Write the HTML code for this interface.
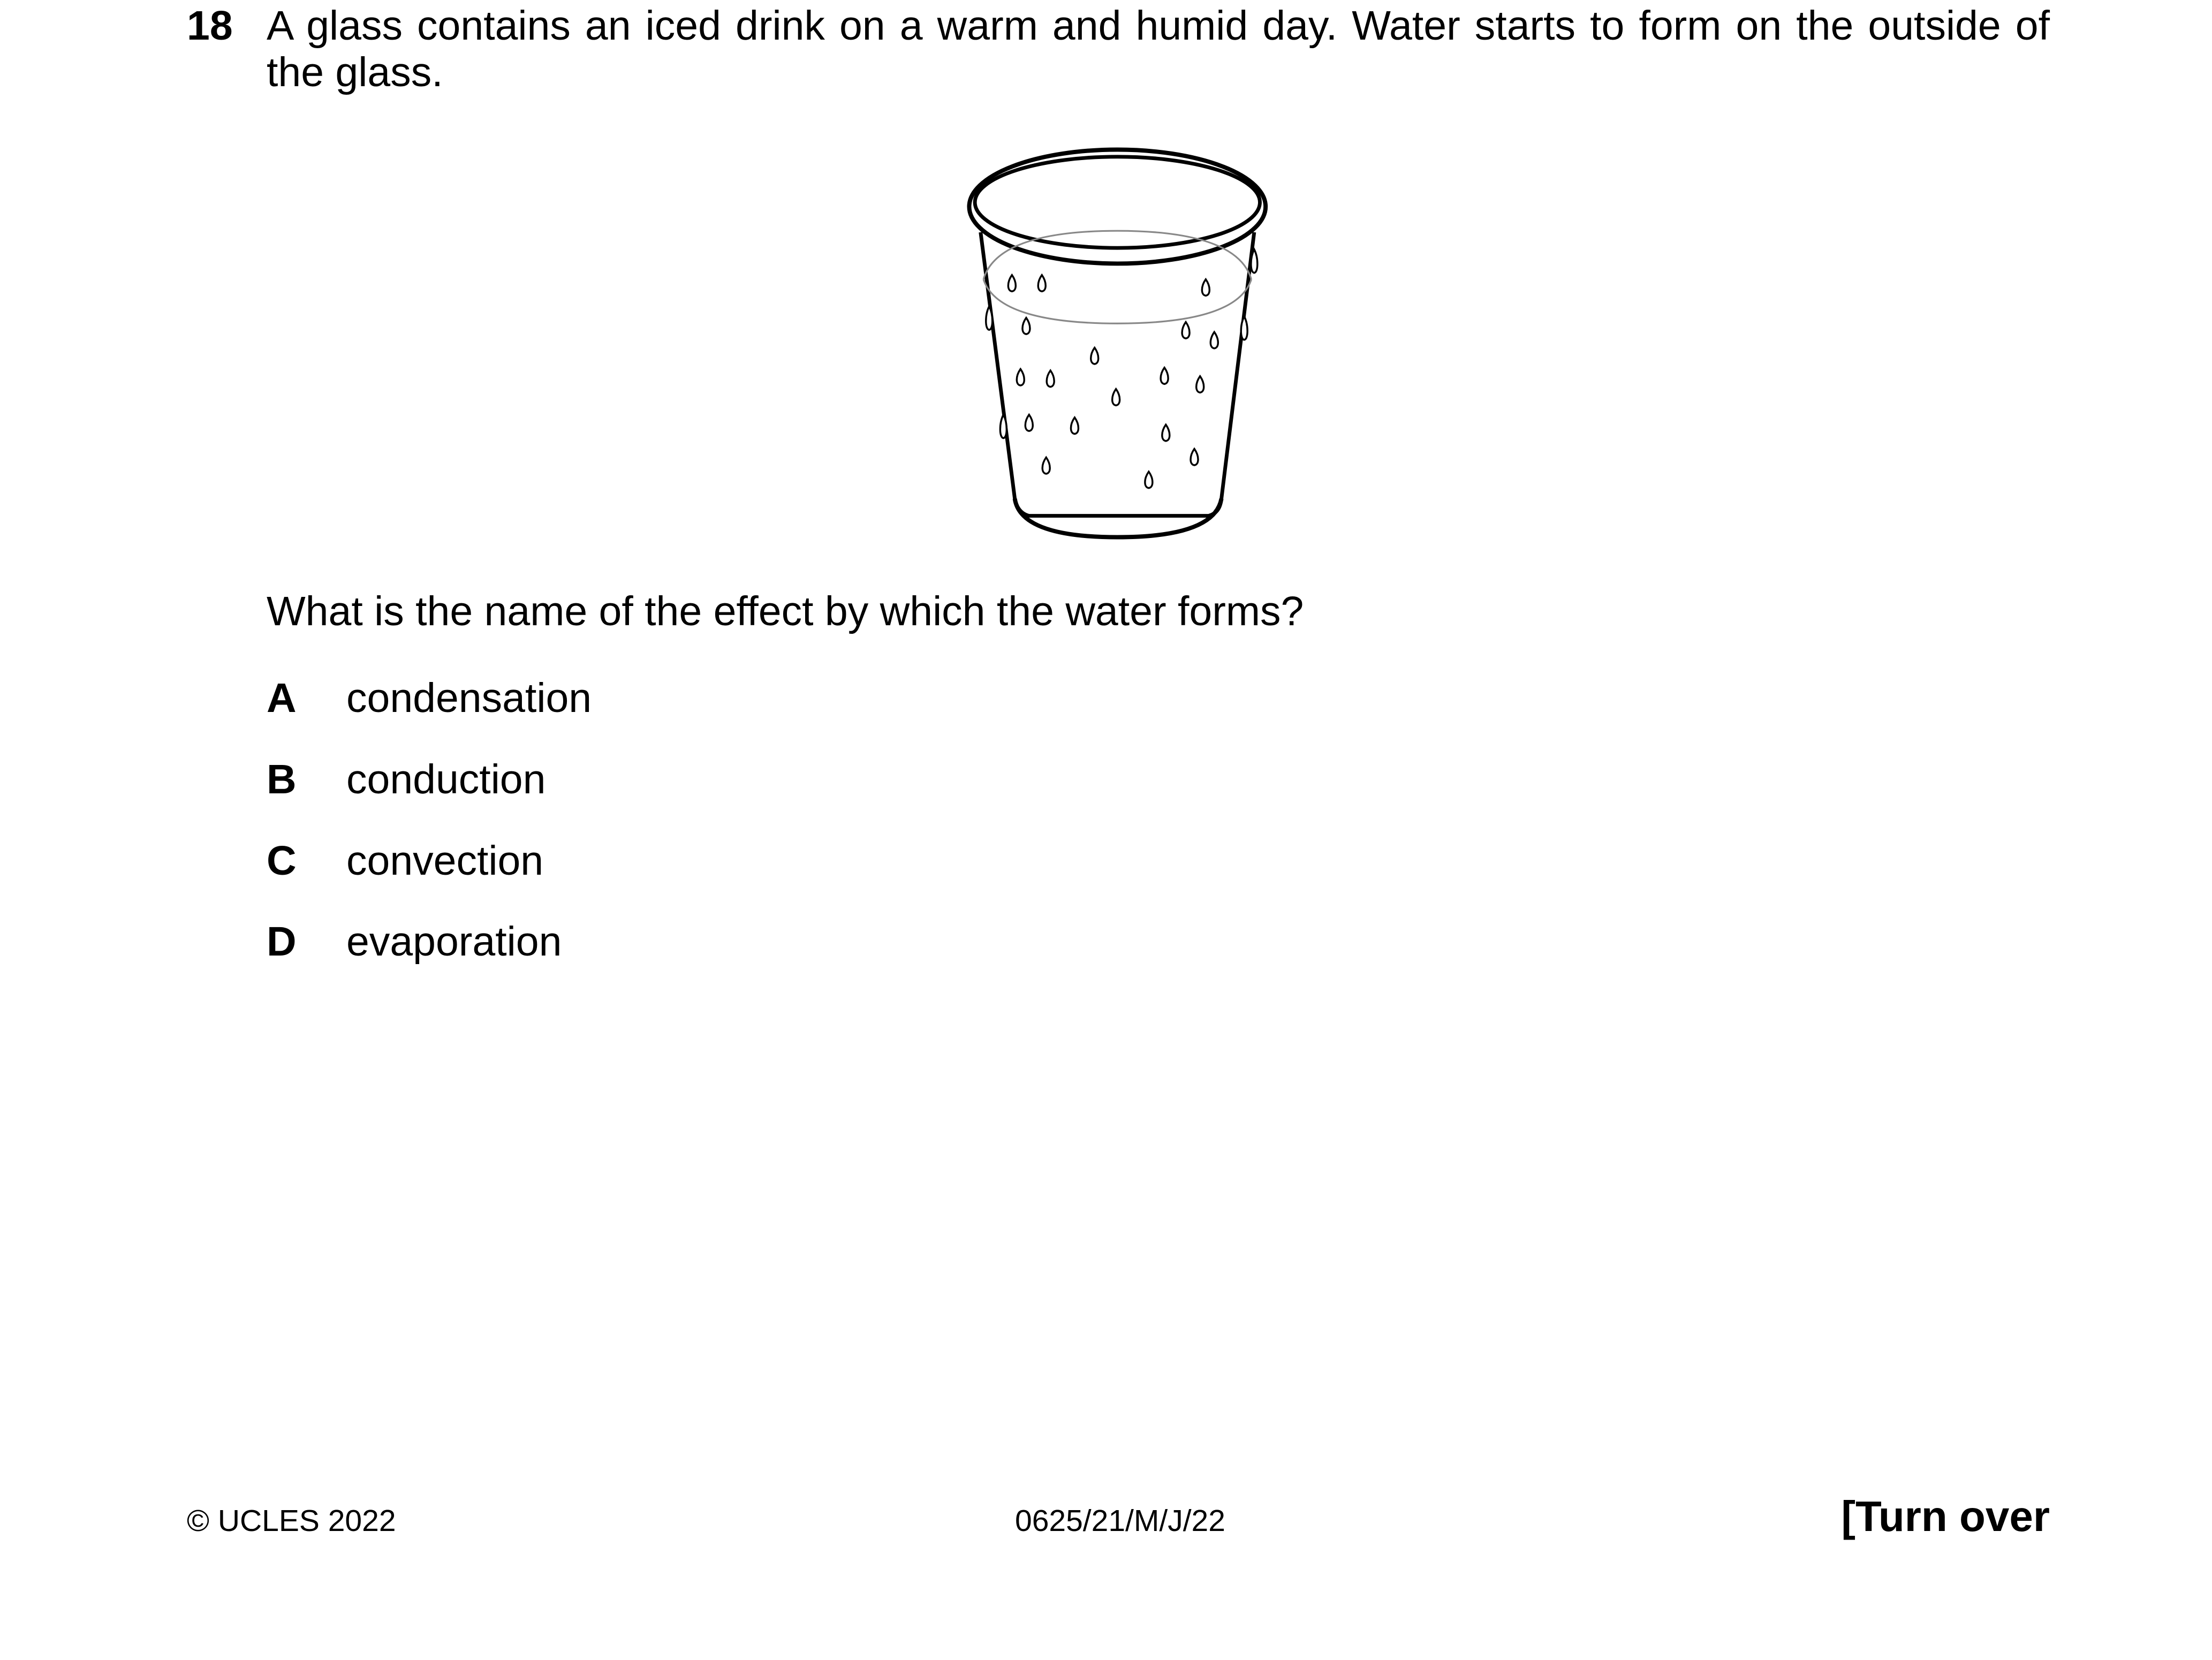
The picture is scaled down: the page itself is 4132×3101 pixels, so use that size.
<!DOCTYPE html>
<html><head><meta charset="utf-8"><style>
body{margin:0;width:4132px;height:3101px;background:#fff;position:relative;overflow:hidden;font-family:"Liberation Sans",Arial,sans-serif;color:#000}
.t{position:absolute;font-size:77px;line-height:77px;white-space:nowrap}
.b{font-weight:bold}
</style></head><body>
<div class="t b" style="left:349px;top:10px">18</div>
<div class="t" style="left:498px;top:10px;width:3331px;text-align:justify;text-align-last:justify">A glass contains an iced drink on a warm and humid day. Water starts to form on the outside of</div>
<div class="t" style="left:498px;top:97px">the glass.</div>
<div class="t" style="left:498px;top:1104px">What is the name of the effect by which the water forms?</div>
<div class="t b" style="left:498px;top:1266px">A</div><div class="t" style="left:647px;top:1266px">condensation</div>
<div class="t b" style="left:498px;top:1418px">B</div><div class="t" style="left:647px;top:1418px">conduction</div>
<div class="t b" style="left:498px;top:1570px">C</div><div class="t" style="left:647px;top:1570px">convection</div>
<div class="t b" style="left:498px;top:1721px">D</div><div class="t" style="left:647px;top:1721px">evaporation</div>
<div class="t" style="left:349px;top:2813px;font-size:57px;line-height:57px">© UCLES 2022</div>
<div class="t" style="left:1896px;top:2813px;font-size:57px;line-height:57px">0625/21/M/J/22</div>
<div class="t b" style="right:303px;top:2793px;font-size:80px;line-height:80px">[Turn over</div>
<svg style="position:absolute;left:0;top:0" width="4132" height="3101" viewBox="0 0 1552 1165">
<g fill="none" stroke="#000" stroke-width="2.6">
<path d="M688 163 L712 350 Q714 360 722 362 L848 362 Q856 360 857 350 L880 163"/>
<path d="M712 350 Q716 377 784 377 Q852 377 857 350" stroke-width="3"/>
<ellipse cx="784" cy="145" rx="104" ry="40" stroke-width="3"/>
<ellipse cx="784" cy="142" rx="100" ry="32"/>
<path d="M690 196 Q700 162 784 162 Q868 162 878 196" stroke="#888" stroke-width="1.2"/>
<path d="M690 196 Q700 227 784 227 Q868 227 878 196" stroke="#888" stroke-width="1.2"/>
</g>
<g fill="#fff" stroke="#000" stroke-width="1.3">
<path d="M0 -6 C3.5 -1 3.5 5 0 5.5 C-3.5 5 -3.5 -1 0 -6Z" transform="translate(710 199)"/>
<path d="M0 -6 C3.5 -1 3.5 5 0 5.5 C-3.5 5 -3.5 -1 0 -6Z" transform="translate(731 199)"/>
<path d="M0 -6 C3.5 -1 3.5 5 0 5.5 C-3.5 5 -3.5 -1 0 -6Z" transform="translate(846 202)"/>
<path d="M0 -6 C3.5 -1 3.5 5 0 5.5 C-3.5 5 -3.5 -1 0 -6Z" transform="translate(720 229)"/>
<path d="M0 -6 C3.5 -1 3.5 5 0 5.5 C-3.5 5 -3.5 -1 0 -6Z" transform="translate(832 232)"/>
<path d="M0 -6 C3.5 -1 3.5 5 0 5.5 C-3.5 5 -3.5 -1 0 -6Z" transform="translate(852 239)"/>
<path d="M0 -6 C3.5 -1 3.5 5 0 5.5 C-3.5 5 -3.5 -1 0 -6Z" transform="translate(768 250)"/>
<path d="M0 -6 C3.5 -1 3.5 5 0 5.5 C-3.5 5 -3.5 -1 0 -6Z" transform="translate(716 265)"/>
<path d="M0 -6 C3.5 -1 3.5 5 0 5.5 C-3.5 5 -3.5 -1 0 -6Z" transform="translate(737 266)"/>
<path d="M0 -6 C3.5 -1 3.5 5 0 5.5 C-3.5 5 -3.5 -1 0 -6Z" transform="translate(817 264)"/>
<path d="M0 -6 C3.5 -1 3.5 5 0 5.5 C-3.5 5 -3.5 -1 0 -6Z" transform="translate(842 270)"/>
<path d="M0 -6 C3.5 -1 3.5 5 0 5.5 C-3.5 5 -3.5 -1 0 -6Z" transform="translate(783 279)"/>
<path d="M0 -6 C3.5 -1 3.5 5 0 5.5 C-3.5 5 -3.5 -1 0 -6Z" transform="translate(722 297)"/>
<path d="M0 -6 C3.5 -1 3.5 5 0 5.5 C-3.5 5 -3.5 -1 0 -6Z" transform="translate(754 299)"/>
<path d="M0 -6 C3.5 -1 3.5 5 0 5.5 C-3.5 5 -3.5 -1 0 -6Z" transform="translate(818 304)"/>
<path d="M0 -6 C3.5 -1 3.5 5 0 5.5 C-3.5 5 -3.5 -1 0 -6Z" transform="translate(838 321)"/>
<path d="M0 -6 C3.5 -1 3.5 5 0 5.5 C-3.5 5 -3.5 -1 0 -6Z" transform="translate(734 327)"/>
<path d="M0 -6 C3.5 -1 3.5 5 0 5.5 C-3.5 5 -3.5 -1 0 -6Z" transform="translate(806 337)"/>
<path d="M0 -9 C3 -3 3 7 0 7.5 C-3 7 -3 -3 0 -9Z" transform="translate(694 224)"/>
<path d="M0 -9 C3 -3 3 7 0 7.5 C-3 7 -3 -3 0 -9Z" transform="translate(880 184)"/>
<path d="M0 -9 C3 -3 3 7 0 7.5 C-3 7 -3 -3 0 -9Z" transform="translate(873 231)"/>
<path d="M0 -9 C3 -3 3 7 0 7.5 C-3 7 -3 -3 0 -9Z" transform="translate(704 300)"/>
</g>
</svg>
</body></html>
